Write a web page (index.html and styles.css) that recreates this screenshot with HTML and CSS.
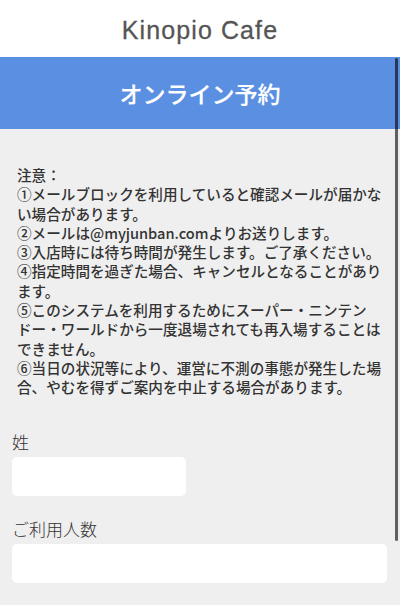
FILE: index.html
```html
<!DOCTYPE html>
<html lang="ja">
<head>
  <meta charset="UTF-8">
  <meta name="viewport" content="width=device-width, initial-scale=1.0">
  <title>Kinopio Cafe</title>
  <link rel="stylesheet" href="styles.css">
</head>
<body>

  <header class="site-header">
    <h1>Kinopio Cafe</h1>
  </header>

  <div class="page-title">
    <h2>オンライン予約</h2>
  </div>

  <main class="content">
    <p class="notice">注意：<br>①メールブロックを利用していると確認メールが届かない場合があります。<br>②メールは@myjunban.comよりお送りします。<br>③入店時には待ち時間が発生します。ご了承ください。<br>④指定時間を過ぎた場合、キャンセルとなることがあります。<br>⑤このシステムを利用するためにスーパー・ニンテンドー・ワールドから一度退場されても再入場することはできません。<br>⑥当日の状況等により、運営に不測の事態が発生した場合、やむを得ずご案内を中止する場合があります。</p>

    <form class="reserve-form">
      <div class="form-group">
        <label for="lastName">姓</label>
        <input type="text" id="lastName" class="input-short">
      </div>
      <div class="form-group">
        <label for="people">ご利用人数</label>
        <input type="text" id="people">
      </div>
    </form>
  </main>

  <div class="scroll-indicator"></div>

</body>
</html>
```

FILE: styles.css
```css
* {
  margin: 0;
  padding: 0;
  box-sizing: border-box;
}
body {
  font-family: "Noto Sans CJK JP", "Noto Sans", sans-serif;
  background-color: #efefef;
  color: #333;
  overflow: hidden;
}
.site-header {
  background-color: #fff;
  height: 57px;
  display: flex;
  justify-content: center;
  align-items: center;
}
.site-header h1 {
  font-family: "Liberation Sans", Arial, sans-serif;
  font-weight: 400;
  font-size: 25px;
  color: #555;
  letter-spacing: 1.1px;
  padding-top: 3px;
  -webkit-text-stroke: 0.3px #555;
}
.page-title {
  background-color: #5a8fe1;
  height: 72px;
  display: flex;
  justify-content: center;
  align-items: center;
}
.page-title h2 {
  color: #fff;
  font-size: 23px;
  font-weight: 500;
  -webkit-text-stroke: 0.2px #fff;
}
.content {
  padding: 36px 12px 0 12px;
}
.notice {
  padding: 0 5px;
  font-size: 14.6px;
  line-height: 19.3px;
  font-weight: 500;
  color: #333;
  line-break: strict;
  width: 376px;
}
.reserve-form {
  margin-top: 34px;
}
.form-group {
  margin-bottom: 22px;
}
label {
  display: block;
  font-size: 17px;
  font-weight: 300;
  line-height: 22px;
  color: #333;
  margin-bottom: 4px;
}
input {
  display: block;
  width: 375px;
  height: 39px;
  border: none;
  border-radius: 5px;
  background-color: #fff;
  font-size: 16px;
  padding: 0 10px;
}
.input-short {
  width: 174px;
}
.scroll-indicator {
  position: absolute;
  top: 58px;
  right: 2px;
  width: 3px;
  height: 483px;
  border-radius: 2px;
  background-color: rgba(0, 0, 0, 0.6);
}
```
